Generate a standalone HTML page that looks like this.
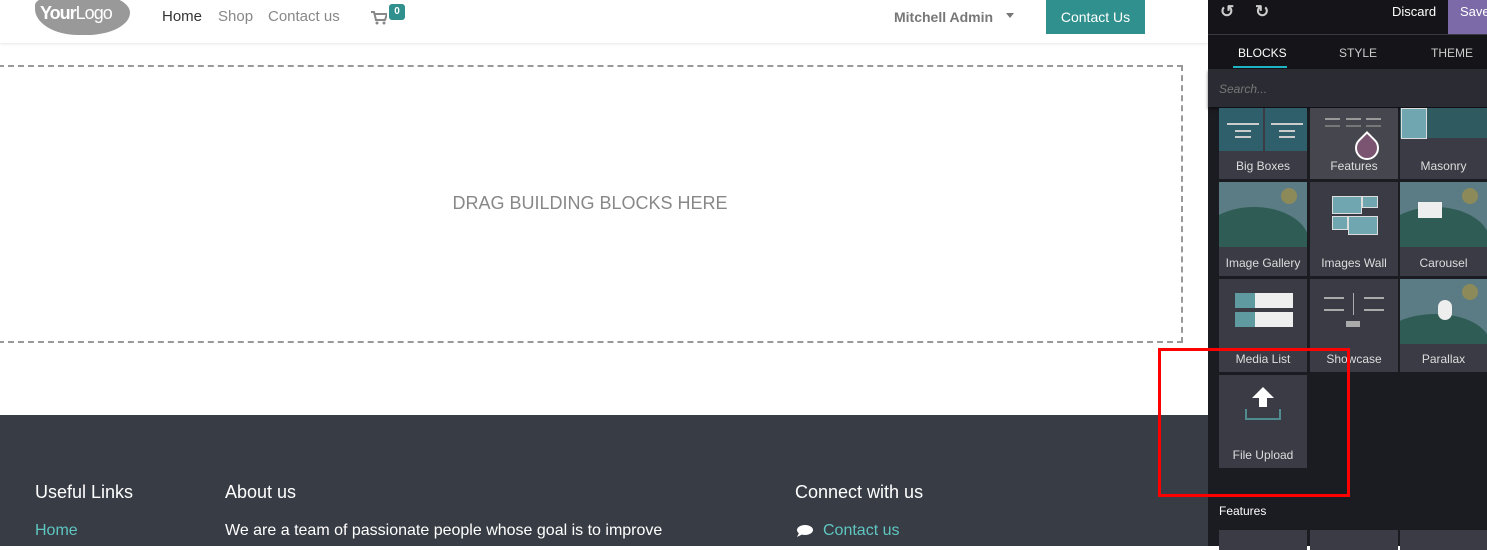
<!DOCTYPE html>
<html><head><style>
body{margin:0;width:1487px;height:546px;overflow:hidden;position:relative;font-family:"Liberation Sans",sans-serif;background:#fff}
.a{position:absolute}
.nav a{position:absolute;top:8px;font-size:15px;color:#888;text-decoration:none}
.tile{position:absolute;background:#3a3b44;color:#ddd;font-size:12px;overflow:hidden}
.tile .lb{position:absolute;bottom:6px;left:0;right:0;text-align:center}
.img{position:absolute;left:0;right:0;top:0;background:#5b7c84;overflow:hidden}
.hill{position:absolute;border-radius:50%;background:#2f5d55}
.sun{position:absolute;width:16px;height:16px;border-radius:50%;background:#8d8a5a}
.ln{position:absolute;height:2px;background:#ccc}
</style></head><body>
<!-- header -->
<div class="a" style="left:0;top:0;width:1208px;height:43px;background:#fff;box-shadow:0 1px 3px rgba(0,0,0,.1)"></div>
<div class="a" style="left:35px;top:-6px;width:95px;height:41px;background:#999;border-radius:40% 45% 50% 50% / 30% 50% 60% 70%"></div>
<div class="a" style="left:40px;top:3px;color:#fff;font-size:18px;font-weight:bold;letter-spacing:-1px">Your<span style="font-weight:normal">Logo</span></div>
<div class="nav"><a style="left:162px;color:#333">Home</a><a style="left:218px">Shop</a><a style="left:268px">Contact us</a></div>
<svg class="a" style="left:371px;top:11px" width="16" height="14"><path d="M0 1h3l2 8h9l2-6H4" fill="none" stroke="#888" stroke-width="2"/><circle cx="6" cy="12" r="1.5" fill="#888"/><circle cx="13" cy="12" r="1.5" fill="#888"/></svg>
<div class="a" style="left:389px;top:4px;width:16px;height:16px;background:#30908e;border-radius:3px;color:#fff;font-size:10px;font-weight:bold;text-align:center;line-height:16px">0</div>
<div class="a" style="left:894px;top:9px;font-size:14px;font-weight:bold;color:#777">Mitchell Admin</div>
<div class="a" style="left:1006px;top:13px;border:4px solid transparent;border-top:5px solid #777"></div>
<div class="a" style="left:1046px;top:0;width:99px;height:34px;background:#30908e;color:#fff;font-size:14px;text-align:center;line-height:34px">Contact Us</div>
<!-- drop zone -->
<div class="a" style="left:-2px;top:65px;width:1181px;height:274px;border:2px dashed #999"></div>
<div class="a" style="left:0;top:193px;width:1180px;text-align:center;font-size:18px;color:#888">DRAG BUILDING BLOCKS HERE</div>
<!-- footer -->
<div class="a" style="left:0;top:415px;width:1208px;height:131px;background:#383c44"></div>
<div class="a" style="left:35px;top:482px;color:#fff;font-size:18px">Useful Links</div>
<div class="a" style="left:225px;top:482px;color:#fff;font-size:18px">About us</div>
<div class="a" style="left:795px;top:482px;color:#fff;font-size:18px">Connect with us</div>
<div class="a" style="left:35px;top:522px;color:#5fc6c2;font-size:16px">Home</div>
<div class="a" style="left:225px;top:522px;color:#fff;font-size:16px">We are a team of passionate people whose goal is to improve</div>
<svg class="a" style="left:796px;top:524px" width="18" height="14"><ellipse cx="9" cy="6" rx="8" ry="5" fill="#fff"/><path d="M3 9 L1 13 L7 10Z" fill="#fff"/></svg>
<div class="a" style="left:823px;top:522px;color:#5fc6c2;font-size:16px">Contact us</div>
<!-- sidebar -->
<div class="a" style="left:1208px;top:0;width:279px;height:546px;background:#1b1b22"></div>
<div class="a" style="left:1208px;top:0;width:279px;height:34px;background:#141419;border-bottom:1px solid #3a3a44"></div>
<div class="a" style="left:1220px;top:2px;color:#ccc;font-size:17px;font-weight:bold">&#8634;</div>
<div class="a" style="left:1255px;top:2px;color:#ccc;font-size:17px;font-weight:bold">&#8635;</div>
<div class="a" style="left:1392px;top:4px;color:#fff;font-size:13px">Discard</div>
<div class="a" style="left:1448px;top:0;width:39px;height:34px;background:#7c6aa8;color:#fff;font-size:13px;padding:4px 0 0 12px;box-sizing:border-box">Save</div>
<div class="a" style="left:1208px;top:35px;width:279px;height:34px;background:#141419"></div>
<div class="a" style="left:1238px;top:46px;color:#fff;font-size:12px">BLOCKS</div>
<div class="a" style="left:1233px;top:66px;width:54px;height:2px;background:#1fb3c4"></div>
<div class="a" style="left:1339px;top:46px;color:#ccc;font-size:12px">STYLE</div>
<div class="a" style="left:1431px;top:46px;color:#ccc;font-size:12px">THEME</div>
<div class="a" style="left:1208px;top:69px;width:279px;height:38px;background:#2b2c33;box-shadow:0 2px 3px rgba(0,0,0,.5)"></div>
<div class="a" style="left:1219px;top:82px;color:#777;font-size:12px;font-style:italic">Search...</div>
<!-- row1 -->
<div class="tile" style="left:1219px;top:108px;width:88px;height:71px"><div class="img" style="height:43px;background:#2e5f6a"></div><div class="a" style="left:44px;top:0;width:2px;height:43px;background:#3a3b44"></div>
<div class="ln" style="left:8px;top:15px;width:32px"></div><div class="ln" style="left:16px;top:22px;width:16px"></div><div class="ln" style="left:16px;top:28px;width:16px"></div>
<div class="ln" style="left:52px;top:15px;width:32px"></div><div class="ln" style="left:60px;top:22px;width:16px"></div><div class="ln" style="left:60px;top:28px;width:16px"></div>
<div class="lb">Big Boxes</div></div>
<div class="tile" style="left:1310px;top:108px;width:88px;height:71px;background:#45464e"><div class="ln" style="left:15px;top:10px;width:15px;background:#999"></div><div class="ln" style="left:36px;top:10px;width:15px;background:#999"></div><div class="ln" style="left:56px;top:10px;width:15px;background:#999"></div><div class="ln" style="left:15px;top:17px;width:15px;background:#777"></div><div class="ln" style="left:36px;top:17px;width:15px;background:#777"></div><div class="ln" style="left:56px;top:17px;width:15px;background:#777"></div><div class="lb">Features</div>
<div class="a" style="left:45px;top:28px;width:20px;height:20px;background:#7a5470;border:2px solid #fff;border-radius:50% 0 50% 50%;transform:rotate(-45deg)"></div></div>
<div class="tile" style="left:1400px;top:108px;width:87px;height:71px"><div class="img" style="height:30px;background:#2f5a60"></div><div class="a" style="left:1px;top:0;width:24px;height:29px;background:#6fa6b0;border:1px solid #ddd"></div><div class="lb">Masonry</div></div>
<!-- row2 -->
<div class="tile" style="left:1219px;top:182px;width:88px;height:94px"><div class="img" style="height:65px"><div class="hill" style="left:-20px;top:25px;width:110px;height:70px"></div><div class="sun" style="left:62px;top:6px"></div></div><div class="lb">Image Gallery</div></div>
<div class="tile" style="left:1310px;top:182px;width:88px;height:94px"><div class="a" style="left:22px;top:14px;width:28px;height:16px;background:#6fa6b0;border:1px solid #ddd"></div><div class="a" style="left:52px;top:14px;width:14px;height:10px;background:#6fa6b0;border:1px solid #ddd"></div><div class="a" style="left:22px;top:34px;width:14px;height:12px;background:#6fa6b0;border:1px solid #ddd"></div><div class="a" style="left:38px;top:34px;width:28px;height:17px;background:#6fa6b0;border:1px solid #ddd"></div><div class="lb">Images Wall</div></div>
<div class="tile" style="left:1400px;top:182px;width:87px;height:94px"><div class="img" style="height:65px"><div class="hill" style="left:-20px;top:25px;width:110px;height:70px"></div><div class="sun" style="left:62px;top:6px"></div><div class="a" style="left:18px;top:20px;width:24px;height:16px;background:#eee"></div></div><div class="lb">Carousel</div></div>
<!-- row3 -->
<div class="tile" style="left:1219px;top:279px;width:88px;height:93px"><div class="a" style="left:16px;top:14px;width:58px;height:15px;background:#eee"></div><div class="a" style="left:16px;top:33px;width:58px;height:15px;background:#eee"></div><div class="a" style="left:16px;top:14px;width:20px;height:15px;background:#5f9aa0"></div><div class="a" style="left:16px;top:33px;width:20px;height:15px;background:#5f9aa0"></div><div class="lb">Media List</div></div>
<div class="tile" style="left:1310px;top:279px;width:88px;height:93px"><div class="ln" style="left:14px;top:18px;width:20px;background:#aaa"></div><div class="ln" style="left:54px;top:18px;width:20px;background:#aaa"></div><div class="ln" style="left:14px;top:30px;width:20px;background:#aaa"></div><div class="ln" style="left:54px;top:30px;width:20px;background:#aaa"></div><div class="a" style="left:43px;top:14px;width:1px;height:22px;background:#aaa"></div><div class="a" style="left:36px;top:42px;width:14px;height:6px;background:#aaa"></div><div class="lb">Showcase</div></div>
<div class="tile" style="left:1400px;top:279px;width:87px;height:93px"><div class="img" style="height:65px"><div class="hill" style="left:-20px;top:35px;width:110px;height:60px"></div><div class="sun" style="left:62px;top:5px"></div><div class="a" style="left:38px;top:21px;width:14px;height:20px;background:#eee;border-radius:7px"></div></div><div class="lb">Parallax</div></div>
<!-- row4 -->
<div class="tile" style="left:1219px;top:375px;width:88px;height:93px"><svg class="a" style="left:25px;top:10px" width="40" height="46"><path d="M19 2 L8 13 H15 V22 H23 V13 H30 Z" fill="#fff"/><path d="M2 24 V34 H36 V24" fill="none" stroke="#4f8c90" stroke-width="2"/></svg><div class="lb">File Upload</div></div>
<div class="a" style="left:1158px;top:348px;width:186px;height:143px;border:3px solid #f00"></div>
<div class="a" style="left:1219px;top:504px;color:#fff;font-size:12px">Features</div>
<div class="tile" style="left:1219px;top:530px;width:88px;height:20px"></div>
<div class="tile" style="left:1310px;top:530px;width:88px;height:20px"></div>
<div class="tile" style="left:1400px;top:530px;width:87px;height:20px"></div>
</body></html>
